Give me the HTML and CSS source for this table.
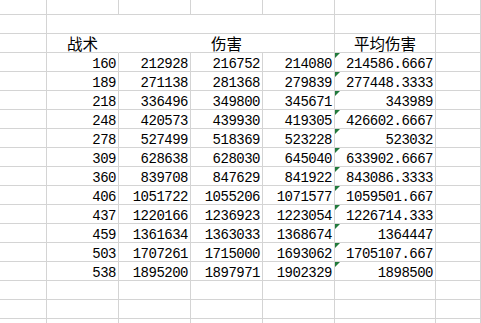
FILE: index.html
```html
<!DOCTYPE html>
<html lang="zh">
<head>
<meta charset="utf-8">
<title>Sheet</title>
<link rel="stylesheet" href="styles.css">
</head>
<body>
<div class="sheet">
  <div class="c"></div><div class="c"></div><div class="c"></div><div class="c"></div><div class="c"></div><div class="c"></div><div class="c"></div>

  <div class="c"></div><div class="c span4"></div><div class="c"></div><div class="c"></div>

  <div class="c"></div><div class="c hd nob">战术</div><div class="c hd span3">伤害</div><div class="c hd">平均伤害</div><div class="c"></div>

  <div class="c"></div><div class="c n">160</div><div class="c n">212928</div><div class="c n">216752</div><div class="c n">214080</div><div class="c n avg">214586.6667</div><div class="c"></div>
  <div class="c"></div><div class="c n">189</div><div class="c n">271138</div><div class="c n">281368</div><div class="c n">279839</div><div class="c n avg">277448.3333</div><div class="c"></div>
  <div class="c"></div><div class="c n">218</div><div class="c n">336496</div><div class="c n">349800</div><div class="c n">345671</div><div class="c n avg">343989</div><div class="c"></div>
  <div class="c"></div><div class="c n">248</div><div class="c n">420573</div><div class="c n">439930</div><div class="c n">419305</div><div class="c n avg">426602.6667</div><div class="c"></div>
  <div class="c"></div><div class="c n">278</div><div class="c n">527499</div><div class="c n">518369</div><div class="c n">523228</div><div class="c n avg">523032</div><div class="c"></div>
  <div class="c"></div><div class="c n">309</div><div class="c n">628638</div><div class="c n">628030</div><div class="c n">645040</div><div class="c n avg">633902.6667</div><div class="c"></div>
  <div class="c"></div><div class="c n">360</div><div class="c n">839708</div><div class="c n">847629</div><div class="c n">841922</div><div class="c n avg">843086.3333</div><div class="c"></div>
  <div class="c"></div><div class="c n">406</div><div class="c n">1051722</div><div class="c n">1055206</div><div class="c n">1071577</div><div class="c n avg">1059501.667</div><div class="c"></div>
  <div class="c"></div><div class="c n">437</div><div class="c n">1220166</div><div class="c n">1236923</div><div class="c n">1223054</div><div class="c n avg">1226714.333</div><div class="c"></div>
  <div class="c"></div><div class="c n">459</div><div class="c n">1361634</div><div class="c n">1363033</div><div class="c n">1368674</div><div class="c n avg">1364447</div><div class="c"></div>
  <div class="c"></div><div class="c n">503</div><div class="c n">1707261</div><div class="c n">1715000</div><div class="c n">1693062</div><div class="c n avg">1705107.667</div><div class="c"></div>
  <div class="c"></div><div class="c n">538</div><div class="c n">1895200</div><div class="c n">1897971</div><div class="c n">1902329</div><div class="c n avg">1898500</div><div class="c"></div>

  <div class="c"></div><div class="c"></div><div class="c"></div><div class="c"></div><div class="c"></div><div class="c"></div><div class="c"></div>
  <div class="c"></div><div class="c"></div><div class="c"></div><div class="c"></div><div class="c"></div><div class="c"></div><div class="c"></div>
  <div class="c"></div><div class="c"></div><div class="c"></div><div class="c"></div><div class="c"></div><div class="c"></div><div class="c"></div>
</div>
</body>
</html>
```

FILE: styles.css
```css
html, body {
  margin: 0;
  padding: 0;
  background: #ffffff;
  overflow: hidden;
}

.sheet {
  display: grid;
  grid-template-columns: 47px 72px 72px 72px 72px 101px 1fr;
  grid-template-rows: 15px;
  grid-auto-rows: 19px;
  width: 481px;
  color: #000;
}

.c {
  box-sizing: border-box;
  border-right: 1px solid #d4d4d4;
  border-bottom: 1px solid #d4d4d4;
  position: relative;
  display: flex;
  align-items: flex-end;
  overflow: visible;
  white-space: nowrap;
}

.span4 { grid-column: span 4; }
.span3 { grid-column: span 3; }
.nob { border-right-color: transparent; }

.n {
  justify-content: flex-end;
  padding-right: 2px;
  font-family: "Liberation Mono", "DejaVu Sans Mono", monospace;
  font-size: 14px;
  letter-spacing: -0.5px;
  line-height: 14px;
}

.hd {
  justify-content: center;
  font-family: "Noto Sans CJK SC", "Noto Sans", sans-serif;
  font-size: 15.5px;
  line-height: 15px;
  padding-bottom: 1px;
}

.avg::before {
  content: "";
  position: absolute;
  top: 0;
  left: 0;
  width: 0;
  height: 0;
  border-top: 5px solid #217a3c;
  border-right: 5px solid transparent;
}
```
